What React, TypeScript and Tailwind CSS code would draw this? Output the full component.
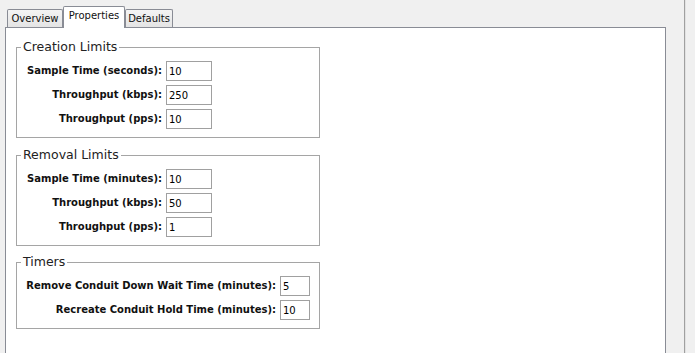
const tahoma = { fontFamily: '"DejaVu Sans", Verdana, sans-serif' };

type Row = { label: string; value: string };

function Tab({ label, active }: { label: string; active?: boolean }) {
    if (active) {
        return (
            <div className="relative z-10 -mb-px flex h-[22px] w-[62px] items-start justify-center rounded-t-[2px] border border-b-0 border-[#898c95] bg-white pt-[3px] text-[10px] leading-[12px] text-[#111]">
                {label}
            </div>
        );
    }
    return (
        <div className="flex h-[18px] items-start justify-center rounded-t-[2px] border border-b-0 border-[#898c95] bg-gradient-to-b from-[#f4f4f4] to-[#e4e4e4] pt-[3px] text-[10px] leading-[12px] text-[#111]">
            {label}
        </div>
    );
}

function GroupBox({
    title,
    rows,
    labelWidth,
    inputWidth,
    className,
}: {
    title: string;
    rows: Row[];
    labelWidth: string;
    inputWidth: string;
    className?: string;
}) {
    return (
        <fieldset className={`w-[304px] border border-[#a5a5a5] pt-[7px] pb-[8px] ${className ?? ""}`}>
            <legend className="ml-[4px] px-[2px] text-[12.5px] leading-[14px] text-[#222]">{title}</legend>
            <div className={`grid ${labelWidth} items-center gap-x-[4px] gap-y-[4px]`}>
                {rows.map((r) => (
                    <div key={r.label} className="contents">
                        <span className="text-right text-[10px] font-bold leading-[12px] text-[#111]">{r.label}</span>
                        <input
                            readOnly
                            value={r.value}
                            className={`h-[20px] ${inputWidth} border border-[#a0a0a0] bg-white pl-[2px] text-[10px] text-black outline-none`}
                            style={tahoma}
                        />
                    </div>
                ))}
            </div>
        </fieldset>
    );
}

export default function App() {
    return (
        <div className="flex h-[353px] w-[695px] overflow-hidden bg-[#f0f0f0] pl-[5px]" style={tahoma}>
            <div className="flex w-[661px] flex-col">
                <div className="flex h-[27px] items-end pl-[2px]">
                    <div className="w-[56px]">
                        <Tab label="Overview" />
                    </div>
                    <Tab label="Properties" active />
                    <div className="w-[48px]">
                        <Tab label="Defaults" />
                    </div>
                </div>
                <div className="flex flex-1 flex-col border-x border-t border-[#898c95] bg-white pt-[12px] pl-[10px]">
                    <GroupBox
                        title="Creation Limits"
                        labelWidth="grid-cols-[145px_46px]"
                        inputWidth="w-[46px]"
                        className="mb-[10px]"
                        rows={[
                            { label: "Sample Time (seconds):", value: "10" },
                            { label: "Throughput (kbps):", value: "250" },
                            { label: "Throughput (pps):", value: "10" },
                        ]}
                    />
                    <GroupBox
                        title="Removal Limits"
                        labelWidth="grid-cols-[145px_46px]"
                        inputWidth="w-[46px]"
                        className="mb-[9px]"
                        rows={[
                            { label: "Sample Time (minutes):", value: "10" },
                            { label: "Throughput (kbps):", value: "50" },
                            { label: "Throughput (pps):", value: "1" },
                        ]}
                    />
                    <GroupBox
                        title="Timers"
                        labelWidth="grid-cols-[259px_30px]"
                        inputWidth="w-[30px]"
                        rows={[
                            { label: "Remove Conduit Down Wait Time (minutes):", value: "5" },
                            { label: "Recreate Conduit Hold Time (minutes):", value: "10" },
                        ]}
                    />
                </div>
            </div>
            <div className="ml-[18px] w-px bg-[#a0a0a0]" />
            <div className="w-px bg-[#e2e2e2]" />
        </div>
    );
}
